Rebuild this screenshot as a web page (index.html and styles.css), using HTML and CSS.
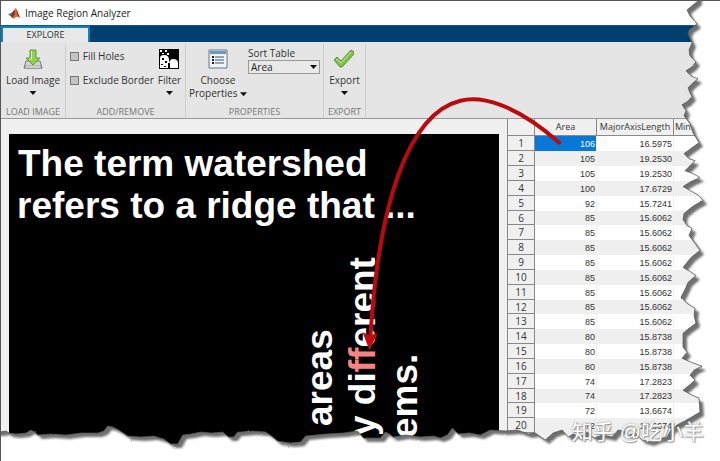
FILE: index.html
```html
<!DOCTYPE html>
<html lang="en">
<head>
<meta charset="utf-8">
<title>Image Region Analyzer</title>
<link rel="stylesheet" href="styles.css">
</head>
<body>
<div class="window">
  <header class="titlebar">
    <svg class="logo" viewBox="0 0 14 14" aria-hidden="true">
      <path d="M0 8 4 6 7 3 6 8 3 10Z" fill="#4a78a8"/>
      <path d="M3 10 7 3 8 1 8 10 5 12Z" fill="#8a3020"/>
      <path d="M8 1C10 2 11 8 13 12 10 9 8 11 6 13L5 11Q8 8 8 1Z" fill="#e06a28"/>
      <path d="M9 2C10 4 11 8 13 12L10 9Z" fill="#9c2418"/>
    </svg>
    <h1>Image Region Analyzer</h1>
  </header>
  <nav class="tabs"><button class="tab">EXPLORE</button></nav>
  <div class="toolstrip">
    <section class="group load">
      <div class="tools">
        <button class="tool">
          <svg viewBox="0 0 20 20" aria-hidden="true">
            <path d="M3 12h14l2 7H1Z" fill="#d4d4d4" stroke="#777"/>
            <path d="M2 17h16v2H2Z" fill="#f6f6f6" stroke="#777" stroke-width=".6"/>
            <path d="M7 1h6v8h4l-7 7-7-7h4Z" fill="#92d050" stroke="#5a9a3a"/>
            <path d="M8.500 2v8H6" fill="none" stroke="#d5f0b2"/>
          </svg>
          <span>Load Image</span><i class="caret"></i>
        </button>
      </div>
      <h2>LOAD IMAGE</h2>
    </section>
    <section class="group filter">
      <div class="tools">
        <div class="checks">
          <label><input type="checkbox">Fill Holes</label>
          <label><input type="checkbox">Exclude Border</label>
        </div>
        <button class="tool">
          <svg viewBox="0 0 20 20" aria-hidden="true">
            <path d="M0 0h20v20H0Z"/>
            <path d="M1 19V9q0-3 4-3 5 0 5 5v3q1-4 4-4 5 0 5 4v5Z" fill="#fff"/>
            <path d="M1 1h2v2H1ZM6 1h2v2H6ZM3 4h2v1H3ZM8 4h2v2H8Z" fill="#fff"/>
            <path d="M3 9h2v2H3ZM6 12h2v2H6ZM2 15h2v1H2ZM9 14h2v5H9ZM5 17h2v1H5Z"/>
          </svg>
          <span>Filter</span><i class="caret"></i>
        </button>
      </div>
      <h2>ADD/REMOVE</h2>
    </section>
    <section class="group props">
      <div class="tools">
        <button class="tool">
          <svg viewBox="0 0 20 20" aria-hidden="true">
            <path d="M1 1h18v18H1Z" fill="#eef4f8" stroke="#63788a"/>
            <path d="M2 2h16v3H2Z" fill="#6d96bb"/>
            <path d="M4 8h2M4 11h2M4 14h2" stroke="#222" stroke-width="2"/>
            <path d="M7 8h9M7 11h9M7 14h9" stroke="#456"/>
          </svg>
          <span>Choose</span><span>Properties <i class="caret"></i></span>
        </button>
        <div class="sort">
          <label for="sort">Sort Table</label>
          <div class="select"><select id="sort"><option>Area</option></select><i class="caret"></i></div>
        </div>
      </div>
      <h2>PROPERTIES</h2>
    </section>
    <section class="group export">
      <div class="tools">
        <button class="tool">
          <svg viewBox="0 0 20 20" aria-hidden="true">
            <path d="M0 11l3-3 4 4L17 1l3 2v2L8 18H6Z" fill="#83c341" stroke="#5d8b45"/>
            <path d="M2 11l1-1 4 4L17 3" fill="none" stroke="#c5e99b"/>
          </svg>
          <span>Export</span><i class="caret"></i>
        </button>
      </div>
      <h2>EXPORT</h2>
    </section>
  </div>
  <main class="workspace">
    <div class="image">
      <svg class="scan" width="490" height="327" viewBox="0 0 490 327">
        <text x="9" y="42">The term watershed</text>
        <text x="8" y="84">refers to a ridge that ...</text>
        <text transform="translate(323 292) rotate(-90)">areas</text>
        <text transform="translate(366 302) rotate(-90)">y di<tspan class="hit">ff</tspan>erent</text>
        <text transform="translate(408 304) rotate(-90)">ems.</text>
      </svg>
    </div>
    <table>
      <colgroup><col class="num"><col class="area"><col class="major"><col></colgroup>
      <thead><tr><th></th><th>Area</th><th>MajorAxisLength</th><th class="cut">Min</th></tr></thead>
      <tbody>
        <tr><th>1</th><td class="selected">106</td><td>16.5975</td><td></td></tr>
        <tr><th>2</th><td>105</td><td>19.2530</td><td></td></tr>
        <tr><th>3</th><td>105</td><td>19.2530</td><td></td></tr>
        <tr><th>4</th><td>100</td><td>17.6729</td><td></td></tr>
        <tr><th>5</th><td>92</td><td>15.7241</td><td></td></tr>
        <tr><th>6</th><td>85</td><td>15.6062</td><td></td></tr>
        <tr><th>7</th><td>85</td><td>15.6062</td><td></td></tr>
        <tr><th>8</th><td>85</td><td>15.6062</td><td></td></tr>
        <tr><th>9</th><td>85</td><td>15.6062</td><td></td></tr>
        <tr><th>10</th><td>85</td><td>15.6062</td><td></td></tr>
        <tr><th>11</th><td>85</td><td>15.6062</td><td></td></tr>
        <tr><th>12</th><td>85</td><td>15.6062</td><td></td></tr>
        <tr><th>13</th><td>85</td><td>15.6062</td><td></td></tr>
        <tr><th>14</th><td>80</td><td>15.8738</td><td></td></tr>
        <tr><th>15</th><td>80</td><td>15.8738</td><td></td></tr>
        <tr><th>16</th><td>80</td><td>15.8738</td><td></td></tr>
        <tr><th>17</th><td>74</td><td>17.2823</td><td></td></tr>
        <tr><th>18</th><td>74</td><td>17.2823</td><td></td></tr>
        <tr><th>19</th><td>72</td><td>13.6674</td><td></td></tr>
        <tr><th>20</th><td>72</td><td>13.6674</td><td></td></tr>
      </tbody>
    </table>
  </main>
  <svg class="overlay" viewBox="0 0 720 461" preserveAspectRatio="none" aria-hidden="true">
    <defs>
      <path id="page" d="M-20-20H698V0L693 4 687 9 690 15 697 23 689 29 688 33 692 42 689 49 690 55 696 61 692 66 686 70 691 75 698 78 692 83 688 87 690 92 692 96 687 101 682 104 686 110 684 115 690 123 693 132 699 142 692 147 684 153 689 158 695 160 690 165 685 170 693 173 700 177 691 181 683 186 692 191 699 195 703 200 694 205 690 208 684 213 683 219 687 225 692 228 689 235 695 243 700 250 691 257 683 267 690 271 696 275 688 282 686 287 681 297 687 303 695 308 694 315 696 323 689 328 683 333 683 347 687 352 682 358 691 362 702 366 694 370 690 375 695 380 688 386 683 390 692 395 699 398 700 412 690 418 677 425 671 430 667 437 658 439 650 442 642 440 635 433 629 435 624 431 618 430 612 437 602 435 594 438 587 432 580 437 573 434 568 437 562 430 553 433 545 440 535 433 528 434 517 430 505 431 490 430 480 435 469 433 458 434 452 428 447 435 440 438 433 436 420 437 405 435 393 437 389 434 385 432 380 438 363 438 357 431 343 433 325 434 305 436 300 442 290 443 277 441 271 436 265 432 252 431 240 432 237 432 233 437 228 437 222 432 211 433 200 432 190 434 182 435 177 444 170 444 163 439 153 436 140 437 127 436 118 430 112 427 107 426 103 431 97 433 80 433 65 435 50 434 37 435 34 432 30 430 25 433 15 434 8 433 5 431 0 432H-20Z"/>
      <filter id="soft"><feGaussianBlur stdDeviation="1"/></filter>
      <mask id="outside"><path d="M-20-20H740V480H-20Z" fill="#fff"/><use href="#page" fill="#000"/></mask>
      <filter id="rough" x="0" y="0" width="1" height="1"><feTurbulence type="fractalNoise" baseFrequency=".3" seed="4"/><feDisplacementMap in="SourceGraphic" scale="2" xChannelSelector="R" yChannelSelector="G"/></filter>
    </defs>
    <g filter="url(#rough)">
      <g mask="url(#outside)">
        <path d="M-20-20H740V480H-20Z" fill="#fff"/>
        <use href="#page" x="4" y="4" fill="#707070" filter="url(#soft)"/>
      </g>
      <use href="#page" fill="none" stroke="#555" stroke-width=".8"/>
    </g>
    <path d="M559 142C514 102 480 95 460 100 407 113 378 205 370 335" fill="none" stroke="#b80b10" stroke-width="4" stroke-linecap="round"/>
    <path d="M362 332 369 335 377 333 369 350Z" fill="#c40a0e"/>
  </svg>
  <p class="watermark" lang="zh">知乎 @吃小羊</p>
</div>
</body>
</html>
```
FILE: styles.css
```css
* { box-sizing: border-box; }
body { margin: 0; background: #fff; font: 11px/13px "Open Sans", sans-serif; color: #333; }
h1, h2, p { margin: 0; font-weight: 400; }
button { border: 0; padding: 0; background: none; font: inherit; color: inherit; }
.window { position: relative; display: flex; flex-direction: column; min-height: 100vh; overflow: hidden; background: #f0f0f0; border-top: 1px solid #555; border-left: 1px solid #555; }
.titlebar { display: flex; align-items: center; gap: 4px; height: 24px; padding-left: 7px; background: #fff; }
.titlebar h1 { font-size: 10px; color: #222; }
.logo { width: 13px; height: 13px; }
.tabs { display: flex; height: 17px; background: #004070; border-top: 1px solid #1a557f; }
.tab { width: 89px; border: 2px solid #0a82c4; border-width: 2px 2px 0; background: #e8e8e8; font-size: 9px; line-height: 14px; }
.toolstrip { display: flex; height: 77px; padding-top: 2px; background: #e5e5e5; border-bottom: 1px solid #999; }
.group { display: flex; flex-direction: column; justify-content: space-between; border-right: 1px solid #ccc; }
.group h2 { font-size: 9px; line-height: 13px; text-align: center; color: #777; white-space: nowrap; }
.load { width: 65px; }
.filter { width: 120px; }
.props { width: 138px; }
.export { width: 42px; }
.tools { display: flex; justify-content: center; padding-top: 5px; font-size: 10px; }
.tool { display: flex; flex-direction: column; align-items: center; line-height: 13px; white-space: nowrap; }
.tool svg { width: 20px; height: 20px; margin-bottom: 5px; }
.caret { display: inline-block; width: 7px; height: 4px; background: #111; clip-path: polygon(0 0, 100% 0, 50% 100%); vertical-align: middle; }
.tool > .caret { margin-top: 4px; }
.checks { display: flex; flex-direction: column; gap: 11px; margin-right: 4px; padding-top: 1px; }
.checks label { display: flex; align-items: center; gap: 4px; white-space: nowrap; }
.checks input { appearance: none; width: 9px; height: 9px; margin: 0; border: 1px solid #777; background: #c4c4c4; }
.sort { display: flex; flex-direction: column; gap: 3px; margin-left: 1px; }
.sort label { line-height: 8px; }
.select { position: relative; }
.select select { display: block; appearance: none; width: 72px; height: 14px; padding: 0 2px; border: 1px solid #999; border-radius: 0; background: #e9e9e9; font: inherit; color: #222; }
.select .caret { position: absolute; right: 3px; top: 5px; }
.workspace { display: flex; flex: 1; gap: 8px; padding-left: 8px; }
.image { flex: 1; margin-top: 15px; background: #000; overflow: hidden; }
.scan { display: block; font: bold 37px "Liberation Sans", sans-serif; fill: #fff; }
.hit { fill: #f48484; }
table { width: 213px; align-self: flex-start; table-layout: fixed; border-collapse: separate; border-spacing: 0; border-left: 1px solid #888; background: #fff; }
.num { width: 27px; }
.area { width: 62px; }
.major { width: 77px; }
tr { height: 15px; }
tbody tr:nth-child(6n) { height: 14px; }
th, td { padding: 0 1px; line-height: 12px; white-space: nowrap; }
th { border-right: 1px solid #888; border-bottom: 1px solid #888; background: #f0f0f0; font-size: 10px; font-weight: 400; }
thead th { height: 17px; font-size: 9px; }
thead .cut { text-align: left; }
td { border-right: 1px solid #f0f0f0; font: 9px/12px "Liberation Sans", sans-serif; text-align: right; }
tbody tr:nth-child(even) td { background: #efefef; }
tbody td.selected { background: #0878d8; color: #fff; }
.overlay { position: absolute; inset: 0; width: 100%; height: 100%; pointer-events: none; }
.watermark { position: absolute; right: 16px; bottom: 17px; font: 21px/24px "Liberation Sans", "Noto Sans CJK SC", sans-serif; color: #fff; text-shadow: 0 0 2px #888, 1px 1px 1px #999; white-space: nowrap; }
```
